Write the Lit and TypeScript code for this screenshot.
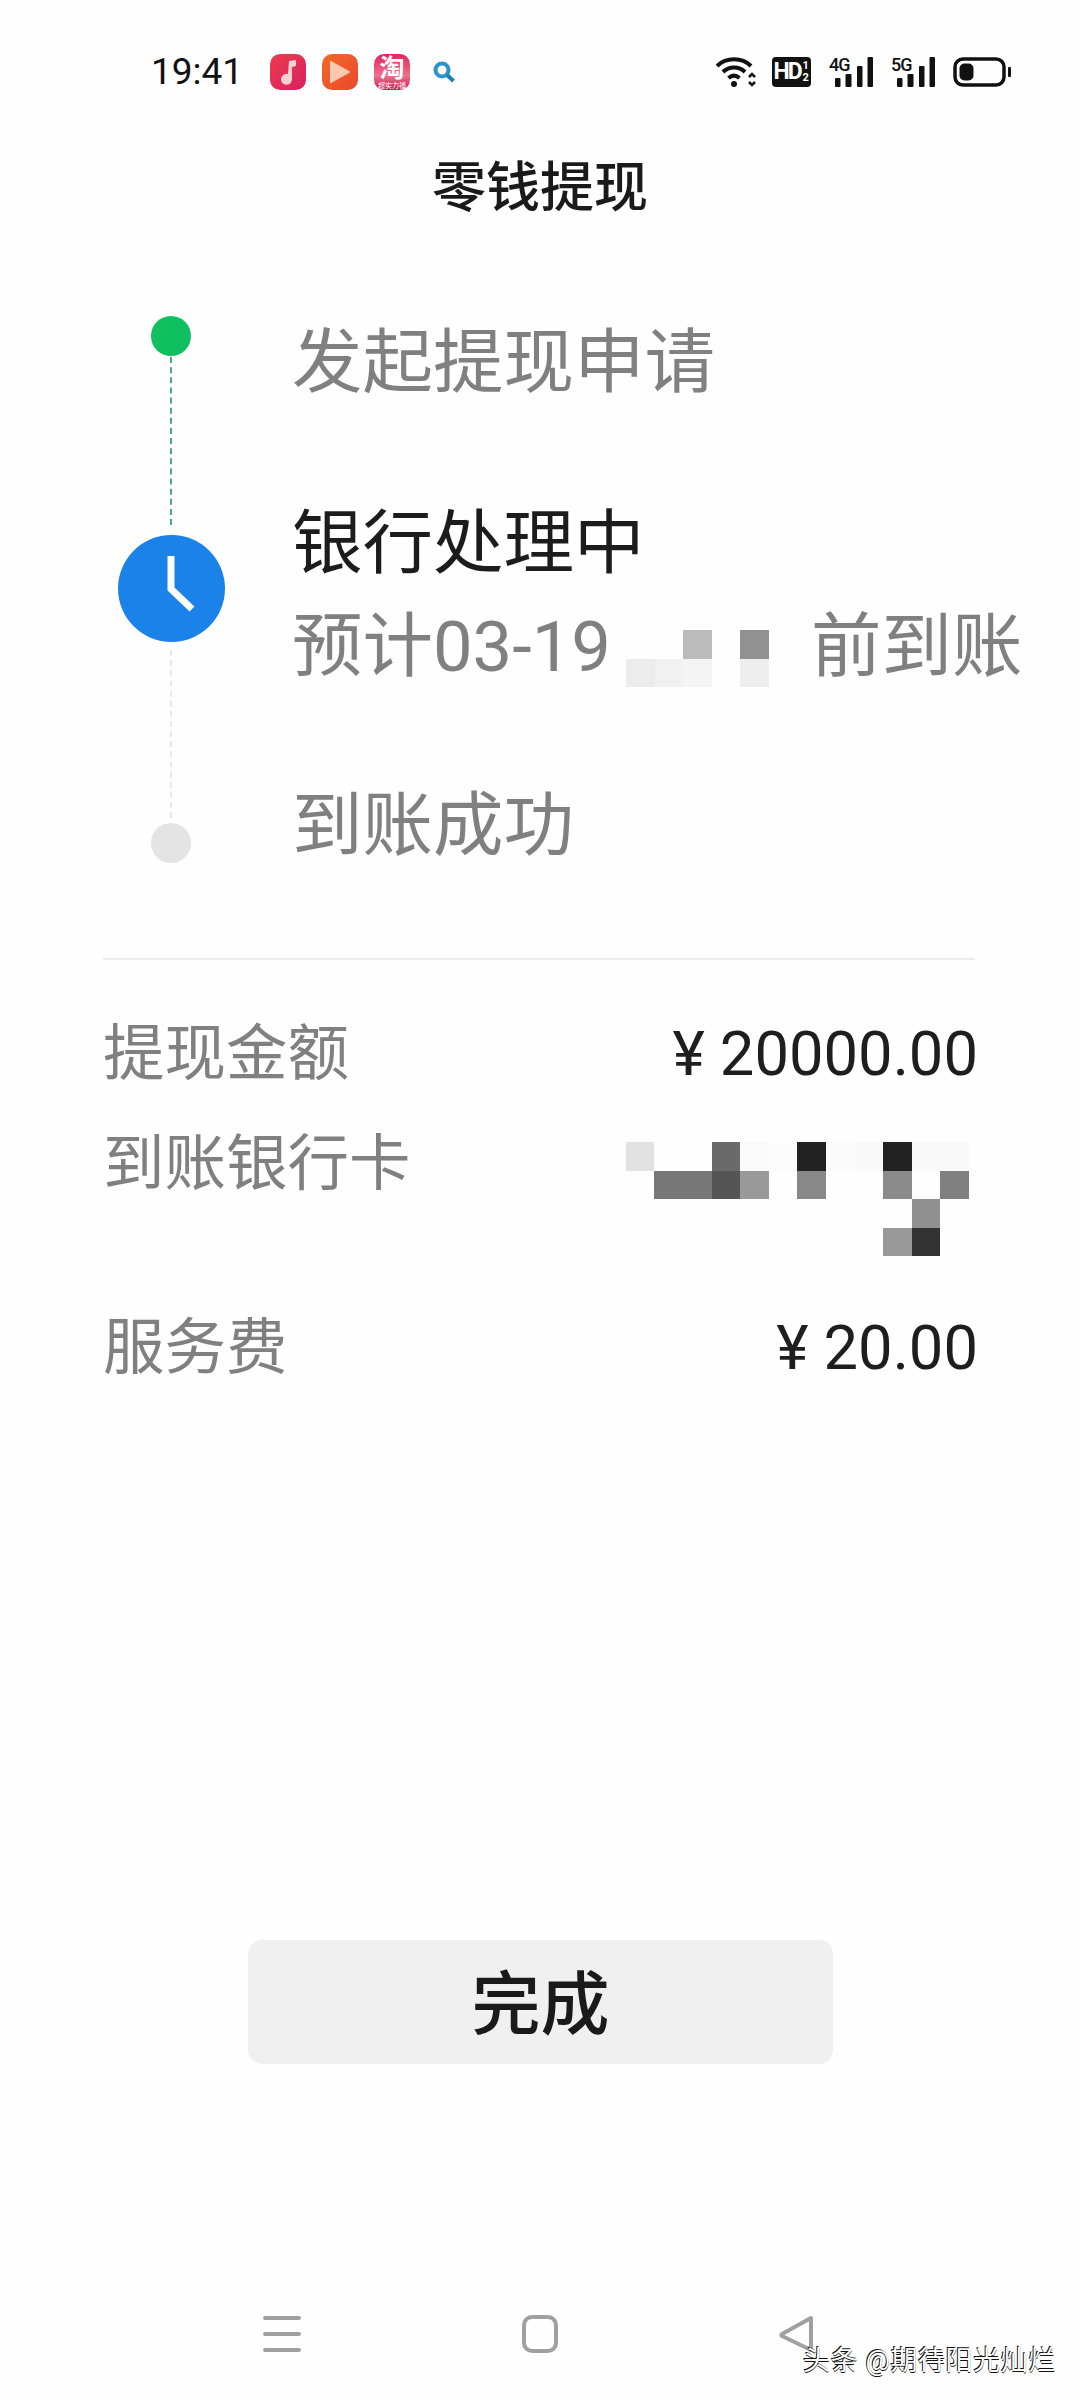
import { LitElement, html, css, svg } from 'lit';
import { customElement } from 'lit/decorators.js';

const signal = (label: string) => html`
  <div class="signal">
    <span class="signal__label">${label}</span>
    <svg width="44" height="30" viewBox="0 0 44 30">
      <rect x="6" y="21" width="5.5" height="9" rx="1"></rect>
      <rect x="16.5" y="17" width="6" height="13" rx="1"></rect>
      <rect x="28" y="9" width="5.5" height="21" rx="1"></rect>
      <rect x="38.5" y="0" width="5.5" height="30" rx="1"></rect>
    </svg>
  </div>
`;

// [col, row, colour] of the blurred blocks over the hidden text
type Cell = [number, number, string];

const DATE_CELLS: Cell[] = [
  [2, 0, '#bbbbbb'], [4, 0, '#919191'],
  [0, 1, '#ececec'], [1, 1, '#f1f1f1'], [2, 1, '#f4f4f4'], [4, 1, '#eeeeee'],
];

const CARD_CELLS: Cell[] = [
  [0, 0, '#e2e2e2'], [3, 0, '#6a6a6a'], [4, 0, '#fafafa'], [5, 0, '#fcfcfc'], [6, 0, '#222222'],
  [7, 0, '#fbfbfb'], [8, 0, '#f9f9f9'], [9, 0, '#222222'], [10, 0, '#f9f9f9'], [11, 0, '#f9f9f9'],
  [1, 1, '#777777'], [2, 1, '#777777'], [3, 1, '#555555'], [4, 1, '#999999'],
  [6, 1, '#888888'], [9, 1, '#8a8a8a'], [11, 1, '#808080'],
  [10, 2, '#909090'],
  [9, 3, '#999999'], [10, 3, '#333333'],
];

const mosaic = (cls: string, cells: Cell[]) => html`
  <div class="mosaic ${cls}">
    ${cells.map(([c, r, color]) => html`
      <i style="grid-column:${c + 1};grid-row:${r + 1};background:${color}"></i>
    `)}
  </div>
`;

const clockHands = svg`<path d="M53 21 V54 L74 74" fill="none" stroke="#fff" stroke-width="7"></path>`;

/**
 * Withdrawal progress page
 */
@customElement('app-root')
export class AppRoot extends LitElement {
  static styles = css`
    :host {
      display: block;
      width: 1080px;
      height: 2400px;
      background: #fefefe;
      font-family: Roboto, "Noto Sans CJK SC", sans-serif;
      color: #1c1c1c;
      overflow: hidden;
    }

    .page {
      position: relative;
      display: flex;
      flex-direction: column;
      height: 2400px;
    }

    /* status bar */
    .status {
      display: flex;
      align-items: center;
      height: 30px;
      margin-top: 57px;
      padding: 0 68px 0 151px;
    }

    .status__time {
      font-size: 37px;
      line-height: 30px;
      width: 119px;
      color: #111;
    }

    .status__apps {
      display: flex;
      align-items: center;
      gap: 16px;
    }

    .app {
      width: 36px;
      height: 36px;
      border-radius: 10px;
      display: flex;
      align-items: center;
      justify-content: center;
    }

    .app--music { background: linear-gradient(135deg, #ee3c50, #d8205f); }
    .app--play { background: linear-gradient(135deg, #f4692a, #e8492c); }

    .app--tao {
      flex-direction: column;
      background: linear-gradient(#e0245e, #f0708c 60%, #c81e50);
      color: #fff;
      font-size: 25px;
      line-height: 27px;
      font-weight: 700;
    }

    .app--tao small {
      font-size: 7px;
      line-height: 8px;
      font-weight: 400;
    }

    .status__search { margin-left: 23px; }

    .status__icons {
      margin-left: auto;
      display: flex;
      align-items: center;
    }

    .hd {
      width: 39px;
      height: 30px;
      margin-left: 16px;
      background: #111;
      border-radius: 4px;
      color: #fff;
      font-size: 23px;
      line-height: 30px;
      font-weight: 700;
      display: flex;
      justify-content: center;
      letter-spacing: -2px;
    }

    .hd small {
      font-size: 11px;
      line-height: 12px;
      margin-left: 2px;
      padding-top: 3px;
      width: 7px;
      word-break: break-all;
      letter-spacing: 0;
    }

    .signal {
      position: relative;
      width: 44px;
      height: 30px;
      margin-left: 18px;
    }

    .signal svg { display: block; fill: #111; }

    .signal__label {
      position: absolute;
      left: 0;
      top: -1px;
      font-size: 18px;
      line-height: 18px;
      font-weight: 500;
      letter-spacing: -1px;
      color: #111;
    }

    .battery { margin-left: 18px; display: block; }

    /* header */
    .title {
      margin: 67px 0 0;
      text-align: center;
      font-size: 54px;
      line-height: 70px;
      font-weight: 500;
      color: #1a1a1a;
    }

    /* timeline */
    .timeline {
      display: flex;
      margin-top: 91px;
    }

    .rail {
      width: 292px;
      flex: none;
      display: flex;
      flex-direction: column;
      align-items: center;
      box-sizing: border-box;
      padding: 1px 0 0 50px;
    }

    .rail__dot {
      width: 40px;
      height: 40px;
      border-radius: 50%;
      flex: none;
    }

    .rail__dot--done { background: #10c060; }
    .rail__dot--todo { background: #e4e4e4; }

    .rail__clock {
      display: block;
      width: 107px;
      height: 107px;
      flex: none;
      border-radius: 50%;
      background: #1a82e8;
    }

    .rail__line {
      width: 0;
      flex: none;
      border-left: 2px dashed;
    }

    .rail__line--done {
      height: 168px;
      margin: 1px 0 10px;
      border-color: #4aa97d;
    }

    .rail__line--todo {
      height: 168px;
      margin: 8px 0 5px;
      border-color: #e8e8e8;
    }

    .steps {
      display: flex;
      flex-direction: column;
      padding-top: 3px;
      font-size: 70.5px;
      line-height: 90px;
      color: #808080;
    }

    .steps__item { margin: 0; white-space: nowrap; }
    .steps__item--current { margin-top: 91px; color: #1c1c1c; }
    .steps__item--eta { margin-top: 13px; display: flex; }
    .steps__item--last { margin-top: 89px; }

    .mosaic {
      display: grid;
      grid-auto-columns: 28.6px;
      grid-auto-rows: 28.6px;
    }

    .mosaic--date {
      grid-template-columns: repeat(5, 28.6px);
      margin: 28px 42px 0 15px;
      align-self: flex-start;
    }

    .mosaic--card { grid-template-columns: repeat(12, 28.6px); margin-right: 9px; }

    /* details */
    .details {
      margin: 87px 105px 0 103px;
      border-top: 2px solid #ececec;
      padding-top: 54px;
      display: flex;
      flex-direction: column;
    }

    .row {
      display: flex;
      justify-content: space-between;
      align-items: flex-start;
      margin-right: -3px;
      font-size: 61.5px;
      line-height: 80px;
      color: #808080;
    }

    .row--card { margin-top: 30px; height: 125px; }
    .row--card .mosaic { margin-top: 18px; }
    .row--fee { margin-top: 59px; }

    .row__value { color: #1e1e1e; display: flex; }
    .row__yen { margin-right: 15px; }

    /* action */
    .done {
      position: absolute;
      left: 248px;
      top: 1940px;
      width: 585px;
      height: 124px;
      border-radius: 14px;
      background: #f0f0f0;
      color: #1a1a1a;
      font-size: 69px;
      font-weight: 500;
      line-height: 132px;
      text-align: center;
    }

    /* navigation bar */
    .nav {
      position: absolute;
      left: 263px;
      top: 2315px;
      width: 552px;
      display: flex;
      justify-content: space-between;
      align-items: flex-start;
    }

    .nav svg { display: block; fill: none; stroke: #a0a0a0; stroke-width: 4; }

    .watermark {
      position: absolute;
      right: 24px;
      top: 2343px;
      font-size: 27px;
      letter-spacing: 0.6px;
      line-height: 36px;
      color: #fff;
      text-shadow: -1px -1px 0 #111, 0 1px 0 #111;
      white-space: nowrap;
    }
  `;

  render() {
    return html`
      <div class="page">
        <div class="status">
          <span class="status__time">19:41</span>
          <div class="status__apps">
            <div class="app app--music">
              <svg width="22" height="26" viewBox="0 0 22 26">
                <path d="M12 2 L19 1 V7 L15 8 V20 A5.5 5.5 0 1 1 11 15 Z" fill="#fbd0d4"></path>
              </svg>
            </div>
            <div class="app app--play">
              <svg width="22" height="24" viewBox="0 0 22 24">
                <path d="M2 2 L20 12 L2 22 Z" fill="#fbc9b0" stroke="#fbc9b0" stroke-width="2" stroke-linejoin="round"></path>
              </svg>
            </div>
            <div class="app app--tao">淘<small>超实力福</small></div>
          </div>
          <svg class="status__search" width="22" height="22" viewBox="0 0 22 22">
            <circle cx="9" cy="9" r="6.5" fill="none" stroke="#2a93cc" stroke-width="4"></circle>
            <path d="M14 14 L20.5 20" stroke="#1f7fb4" stroke-width="4"></path>
          </svg>

          <div class="status__icons">
            <svg width="40" height="30" viewBox="0 0 40 30" fill="none" stroke="#111" stroke-width="4">
              <path d="M1 9 C10 0 26 0 35 9"></path>
              <path d="M7 15 C13 9 23 9 29 15"></path>
              <path d="M12.5 21 C16 18 20 18 23.5 21"></path>
              <circle cx="18" cy="27" r="3" fill="#111" stroke="none"></circle>
              <path d="M33 20 L36 17 L39 20 M33 25 L36 28 L39 25" stroke-width="2.5"></path>
            </svg>
            <div class="hd">HD<small>12</small></div>
            ${signal('4G')}
            ${signal('5G')}
            <svg class="battery" width="59" height="30" viewBox="0 0 59 30">
              <rect x="2" y="2" width="49" height="26" rx="8" fill="none" stroke="#111" stroke-width="3.5"></rect>
              <rect x="6.5" y="6.5" width="14" height="17" rx="5" fill="#111"></rect>
              <rect x="55" y="10" width="3" height="10" rx="1" fill="#111"></rect>
            </svg>
          </div>
        </div>

        <h1 class="title">零钱提现</h1>

        <div class="timeline">
          <div class="rail">
            <div class="rail__dot rail__dot--done"></div>
            <div class="rail__line rail__line--done"></div>
            <svg class="rail__clock" viewBox="0 0 107 107">${clockHands}</svg>
            <div class="rail__line rail__line--todo"></div>
            <div class="rail__dot rail__dot--todo"></div>
          </div>
          <div class="steps">
            <p class="steps__item">发起提现申请</p>
            <p class="steps__item steps__item--current">银行处理中</p>
            <div class="steps__item steps__item--eta">
              <span>预计03-19</span>
              ${mosaic('mosaic--date', DATE_CELLS)}
              <span>前到账</span>
            </div>
            <p class="steps__item steps__item--last">到账成功</p>
          </div>
        </div>

        <div class="details">
          <div class="row">
            <span>提现金额</span>
            <span class="row__value"><span class="row__yen">¥</span>20000.00</span>
          </div>
          <div class="row row--card">
            <span>到账银行卡</span>
            ${mosaic('mosaic--card', CARD_CELLS)}
          </div>
          <div class="row row--fee">
            <span>服务费</span>
            <span class="row__value"><span class="row__yen">¥</span>20.00</span>
          </div>
        </div>

        <div class="done">完成</div>

        <div class="nav">
          <svg width="38" height="38" viewBox="0 0 38 38" stroke-linecap="round">
            <path d="M2 3 H36 M2 19 H36 M2 35 H36"></path>
          </svg>
          <svg width="36" height="38" viewBox="0 0 36 38">
            <rect x="2" y="2" width="32" height="34" rx="8"></rect>
          </svg>
          <svg width="36" height="38" viewBox="0 0 36 38">
            <path d="M32 3 L3 19 Q2 20 3 21 L32 35 Z" stroke-linejoin="round"></path>
          </svg>
        </div>

        <div class="watermark">头条 @期待阳光灿烂</div>
      </div>
    `;
  }
}
